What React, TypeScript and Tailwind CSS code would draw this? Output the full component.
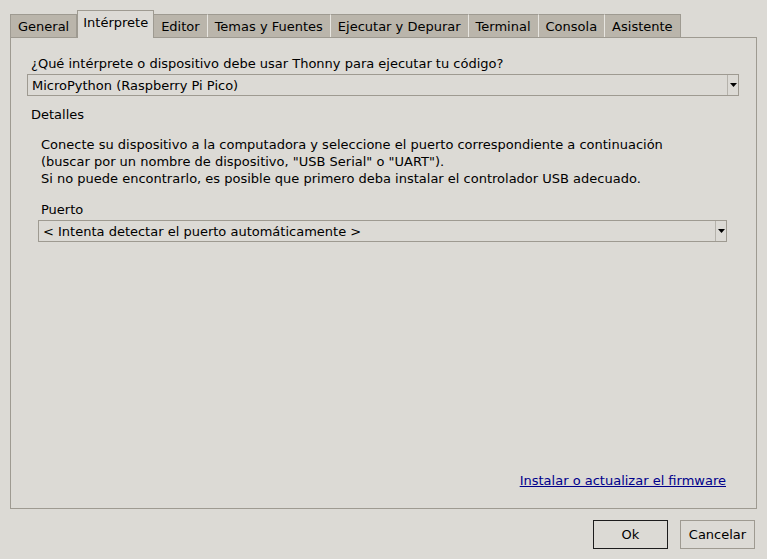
import React from "react";

const tabs = ["General", "Intérprete", "Editor", "Temas y Fuentes", "Ejecutar y Depurar", "Terminal", "Consola", "Asistente"];

function Combo({ text, className }: { text: string; className?: string }) {
  return (
    <div className={"flex h-[22px] border border-[#9e9a91] bg-[#dcdad5] " + (className ?? "")}>
      <div className="flex-1 flex items-center pl-[4px] leading-none text-[13px] text-[#000] whitespace-nowrap overflow-hidden">{text}</div>
      <div className="w-[11px] border-l border-[#b5b2ab] flex items-center justify-center">
        <svg width="7" height="4" viewBox="0 0 7 4"><path d="M0 0h7L3.5 4z" fill="#000" /></svg>
      </div>
    </div>
  );
}

export default function App() {
  return (
    <div
      className="w-[767px] h-[559px] bg-[#dcdad5] text-[#000] text-[13px] flex flex-col"
      style={{ fontFamily: '"DejaVu Sans", sans-serif' }}
    >
      <div className="flex items-end pl-[10px] pt-[10px] h-[38px]">
        {tabs.map((t) => {
          const sel = t === "Intérprete";
          return sel ? (
            <div
              key={t}
              className="relative z-10 h-[28px] px-[5px] pt-[3px] border border-b-0 border-[#9e9a91] bg-[#dcdad5] leading-[17px] whitespace-nowrap"
            >
              {t}
            </div>
          ) : (
            <div
              key={t}
              className="h-[24px] px-[7px] pt-[3px] border border-[#9e9a91] border-l-[#e8e6e1] bg-[#bab5ab] leading-[17px] whitespace-nowrap -ml-px first:ml-0 first:border-l-[#9e9a91]"
            >
              {t}
            </div>
          );
        })}
      </div>
      <div className="mx-[10px] -mt-px h-[472px] border border-[#9e9a91] flex flex-col pl-[16px] pr-[17px]">
        <div className="mt-[17px] leading-[17px] pl-[4px]">¿Qué intérprete o dispositivo debe usar Thonny para ejecutar tu código?</div>
        <Combo text="MicroPython (Raspberry Pi Pico)" className="mt-[2px]" />
        <div className="mt-[10px] leading-[17px] pl-[4px]">Detalles</div>
        <div className="mt-[13px] pl-[14px] leading-[17px]">
          <div>Conecte su dispositivo a la computadora y seleccione el puerto correspondiente a continuación</div>
          <div>(buscar por un nombre de dispositivo, "USB Serial" o "UART").</div>
          <div>Si no puede encontrarlo, es posible que primero deba instalar el controlador USB adecuado.</div>
        </div>
        <div className="mt-[14px] pl-[14px] leading-[17px]">Puerto</div>
        <Combo text="< Intenta detectar el puerto automáticamente >" className="ml-[11px] mr-[12px] mt-[2px]" />
        <div className="flex-1" />
        <div className="flex justify-end mr-[13px] mb-[19px] leading-[17px]">
          <span className="text-[#00008b] underline">Instalar o actualizar el firmware</span>
        </div>
      </div>
      <div className="flex justify-end gap-[12px] pr-[12px] mt-[11px]">
        <div className="w-[75px] h-[29px] border border-[#1c1c1c] bg-[#dcdad5] flex items-center justify-center">Ok</div>
        <div className="w-[75px] h-[29px] border border-[#9e9a91] bg-[#dcdad5] flex items-center justify-center">Cancelar</div>
      </div>
    </div>
  );
}
